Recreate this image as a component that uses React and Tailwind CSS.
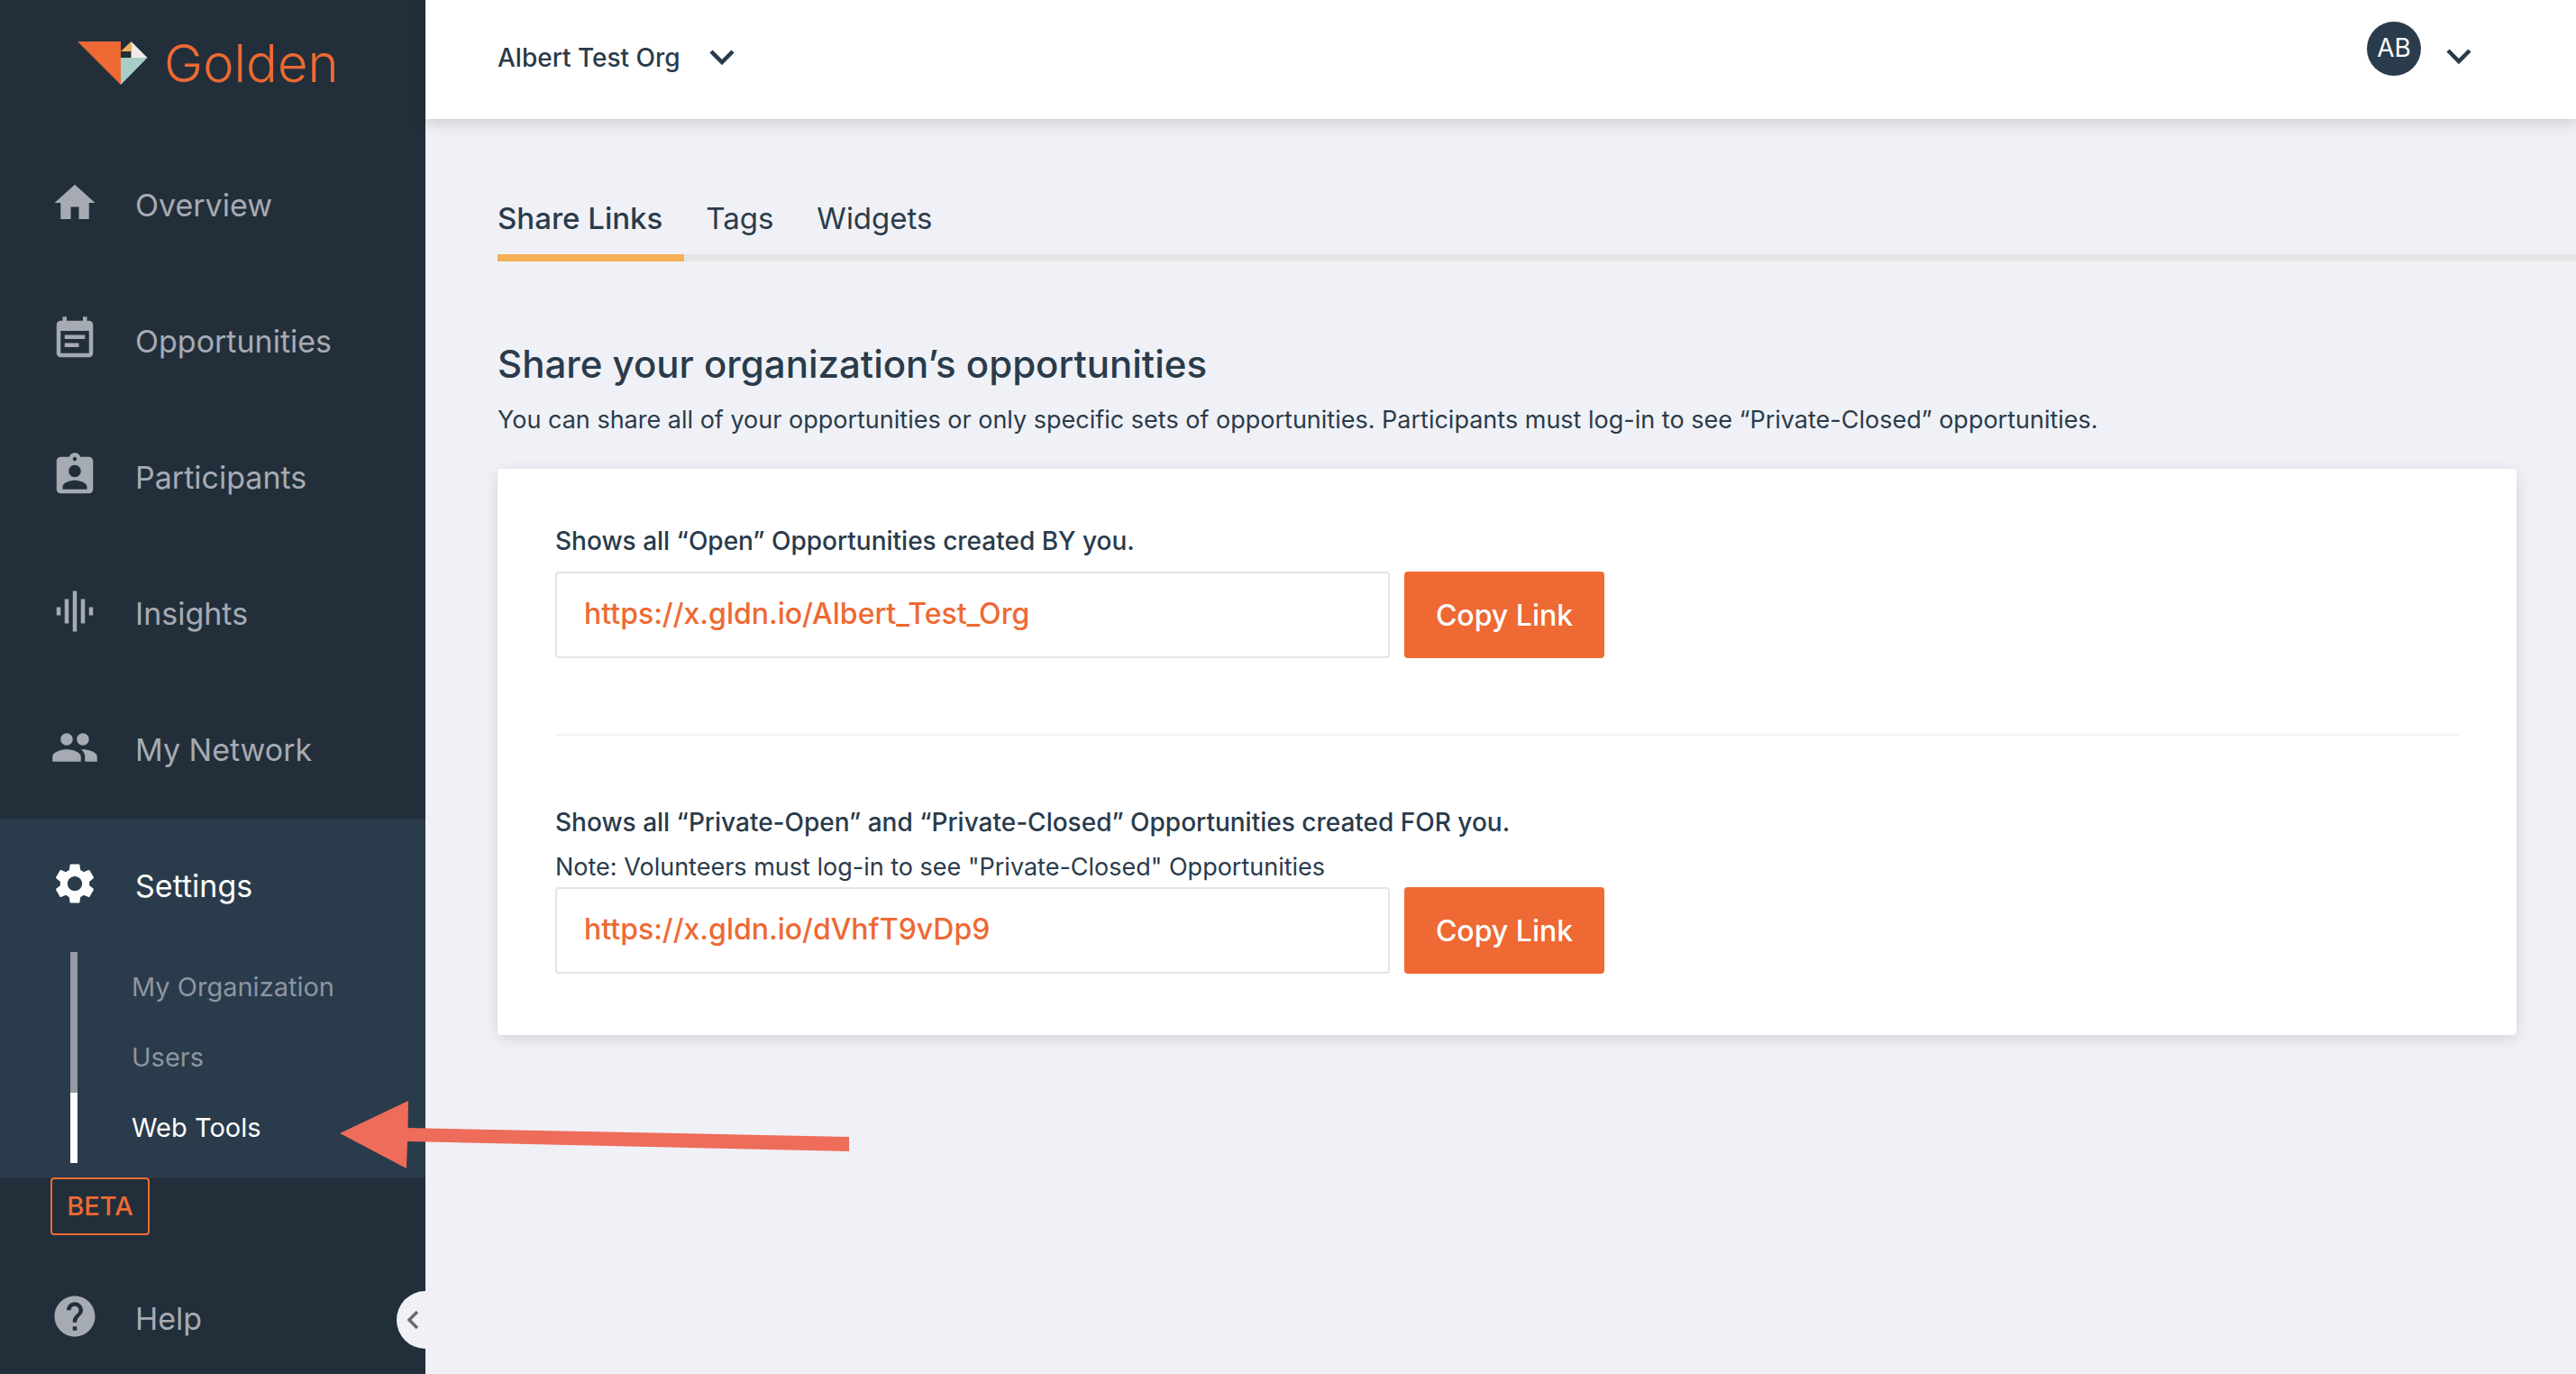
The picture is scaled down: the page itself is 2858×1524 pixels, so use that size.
import React, { useState } from "react";
import {
	MdAssignmentInd,
	MdEventNote,
	MdGraphicEq,
	MdHelp,
	MdHome,
	MdPeople,
	MdSettings,
} from "react-icons/md";

const mainLinks = [
	{ label: "Overview", icon: MdHome },
	{ label: "Opportunities", icon: MdEventNote },
	{ label: "Participants", icon: MdAssignmentInd },
	{ label: "Insights", icon: MdGraphicEq },
	{ label: "My Network", icon: MdPeople },
];

const settingsLinks = ["My Organization", "Users", "Web Tools"];

const tabs = ["Share Links", "Tags", "Widgets"];

function Logo() {
	return (
		<a href="#" className="flex h-[153px] items-start pl-[86px] pt-[46px]">
			<svg width="78" height="49" viewBox="0 0 78 49" aria-hidden="true">
				<path d="M0 0H48V48Z" fill="#ee6933" />
				<path d="M48 11L59.500 0V11Z" fill="#f5af55" />
				<path d="M59.500 0L77.500 18H59.500Z" fill="#f1ebe6" />
				<path d="M48 18H77.500L48 48Z" fill="#a9cdc9" />
			</svg>
			<span className="-mt-2 ml-[18px] text-[58px] font-light leading-[64px] text-[#ee6933]">
				Golden
			</span>
		</a>
	);
}

function NavLink({ label, icon: Icon, active }) {
	return (
		<a
			href="#"
			className={`flex h-[151px] items-start gap-10 pl-14 pt-[45px] ${
				active ? "text-white" : "text-[#a6abb3]"
			}`}
		>
			<Icon size={54} />
			<span className="pt-1.5 text-[34px] leading-[48px]">{label}</span>
		</a>
	);
}

function Sidebar() {
	const [page, setPage] = useState("Web Tools");

	return (
		<aside className="relative h-screen w-[472px] shrink-0 overflow-hidden bg-[#222f3a]">
			<Logo />
			<nav>
				{mainLinks.map((link) => (
					<NavLink key={link.label} {...link} />
				))}
				<div className="bg-[#2a3b4b] pb-4">
					<div className="h-[148px]">
						<NavLink label="Settings" icon={MdSettings} active />
					</div>
					{settingsLinks.map((name) => (
						<a
							key={name}
							href="#"
							onClick={() => setPage(name)}
							className={`ml-[78px] flex h-[78px] items-center border-l-8 pl-[60px] text-[29px] ${
								page === name
									? "border-white text-white"
									: "border-[#959ca5] text-[#8d959f]"
							}`}
						>
							{name}
						</a>
					))}
				</div>
				<span className="ml-14 flex h-16 w-[110px] items-center justify-center rounded border-2 border-[#ee6933] text-[29px] font-medium text-[#ee6933]">
					BETA
				</span>
				<div className="pt-[18px]">
					<NavLink label="Help" icon={MdHelp} />
				</div>
			</nav>
			<button
				aria-label="Collapse menu"
				className="absolute bottom-7 right-0 flex h-16 w-8 items-center justify-center rounded-l-full bg-[#f0f1f6] pl-1"
			>
				<svg width="12" height="20" viewBox="0 0 12 20" fill="none" aria-hidden="true">
					<path d="M11 1L2 10L11 19" stroke="#6b6b6b" strokeWidth="3.500" />
				</svg>
			</button>
		</aside>
	);
}

function Chevron() {
	return (
		<svg width="28" height="18" viewBox="0 0 28 18" fill="none" aria-hidden="true">
			<path d="M2 2L14 14L26 2" stroke="#2a3b4b" strokeWidth="4.500" />
		</svg>
	);
}

function TopBar() {
	return (
		<header className="relative flex h-[132px] items-start justify-between bg-white pl-20 pr-[116px] shadow-[0_4px_16px_rgba(0,0,0,0.16)]">
			<button className="flex items-center gap-8 pt-10 text-[28px] font-medium leading-[48px]">
				Albert Test Org
				<Chevron />
			</button>
			<button className="flex items-end gap-7 pt-6">
				<span className="flex size-[60px] justify-center rounded-full bg-[#2a3b4b] text-[28px] leading-[58px] text-white">
					AB
				</span>
				<span className="pb-3">
					<Chevron />
				</span>
			</button>
		</header>
	);
}

function ShareLink({ id, title, note, url }) {
	const [copied, setCopied] = useState(false);

	const copyToClipboard = () => {
		navigator.clipboard.writeText(url).then(() => setCopied(true));
	};

	return (
		<div>
			<label
				htmlFor={id}
				className={`block text-[28px] font-medium leading-[56px] ${note ? "" : "mb-1.5"}`}
			>
				{title}
			</label>
			{note && <p className="text-[27px] leading-[44px]">{note}</p>}
			<div className="flex gap-4">
				<input
					id={id}
					readOnly
					value={url}
					className="h-24 w-[926px] rounded border-2 border-[#e3e3ea] pb-1 pl-[30px] text-[32px] font-medium text-[#ee6933]"
				/>
				<button
					onClick={copyToClipboard}
					className="h-24 w-[222px] rounded bg-[#ee6933] pt-0.5 text-[32px] font-medium text-white"
				>
					{copied ? "Copied" : "Copy Link"}
				</button>
			</div>
		</div>
	);
}

export default function App() {
	const [tab, setTab] = useState("Share Links");

	return (
		<div className="flex min-h-screen bg-[#f0f1f6] font-['Inter','Noto_Sans',sans-serif] text-[#2a3b4b]">
			<Sidebar />
			<div className="min-w-0 flex-1">
				<TopBar />
				<main className="pl-20 pt-20">
					<div role="tablist" className="flex border-b-8 border-[#e5e5e5]">
						{tabs.map((name) => (
							<button
								key={name}
								role="tab"
								aria-selected={tab === name}
								onClick={() => setTab(name)}
								className={`-mb-2 h-[78px] border-b-8 pb-2 pr-6 text-[33px] ${
									tab === name
										? "border-[#f5af55] font-medium"
										: "border-transparent pl-6"
								}`}
							>
								{name}
							</button>
						))}
					</div>
					<h1 className="mt-[86px] text-[42px] font-medium leading-[56px]">
						Share your organization’s opportunities
					</h1>
					<p className="mt-2.5 text-[27px] leading-[48px]">
						You can share all of your opportunities or only specific sets of opportunities.
						Participants must log-in to see “Private-Closed” opportunities.
					</p>
					<section className="mr-[66px] mt-[30px] rounded bg-white px-16 pb-[68px] pt-[52px] shadow-[0_4px_16px_rgba(0,0,0,0.12)]">
						<ShareLink
							id="open-link"
							title="Shows all “Open” Opportunities created BY you."
							url="https://x.gldn.io/Albert_Test_Org"
						/>
						<hr className="mb-[68px] mt-[84px] border-t-2 border-[#f0f1f6]" />
						<ShareLink
							id="private-link"
							title="Shows all “Private-Open” and “Private-Closed” Opportunities created FOR you."
							note={'Note: Volunteers must log-in to see "Private-Closed" Opportunities'}
							url="https://x.gldn.io/dVhfT9vDp9"
						/>
					</section>
				</main>
			</div>
			{/* arrow pointing at the Web Tools entry */}
			<svg
				className="pointer-events-none absolute left-[377px] top-[1221px]"
				width="566"
				height="76"
				viewBox="0 0 566 76"
				aria-hidden="true"
			>
				<path d="M0 36L76 0L75.500 30L565 40V56L75 45L74 75Z" fill="#ee6c5a" />
			</svg>
		</div>
	);
}
